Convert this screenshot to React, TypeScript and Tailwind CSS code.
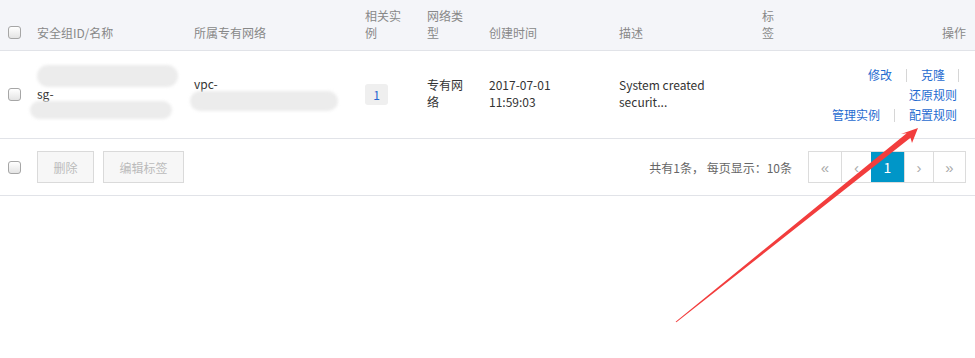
import type { ReactNode } from 'react'

const COLS = 'grid grid-cols-[29px_157px_171px_62px_62px_130px_143px_32px_1fr]'

function Checkbox() {
  return (
    <span className="block w-[13px] h-[13px] rounded-[3px] border border-[#a6a6a6] bg-linear-to-b from-white to-[#e4e4e4]" />
  )
}

function Blob({ w, h, className = '' }: { w: string; h: string; className?: string }) {
  return <span className={`block rounded-full bg-[#ececec] blur-[1.5px] ${w} ${h} ${className}`} />
}

function Sep() {
  return <span className="mx-[14px] w-px h-[13px] bg-[#d6d6d6]" />
}

function Link({ children }: { children: ReactNode }) {
  return <a className="text-[#1f6bd0] cursor-pointer">{children}</a>
}

function PageCell({ children, w, active }: { children: ReactNode; w: string; active?: boolean }) {
  return (
    <span
      className={`flex items-center justify-center h-full ${w} ${
        active
          ? 'bg-[#0096c8] text-white text-[14px]'
          : "text-[#aaa] text-[15px] font-['Liberation_Sans',sans-serif] border-l border-[#dcdcdc] first:border-l-0"
      }`}
    >
      {children}
    </span>
  )
}

export default function App() {
  return (
    <div className="relative w-[975px] h-[358px] overflow-hidden bg-white text-[12px] leading-[17px] text-[#333] font-['Noto_Sans_CJK_SC',sans-serif]">
      {/* header */}
      <div className={`${COLS} h-[51px] items-end pb-[9px] bg-[#f4f5f9] border-b border-[#e1e3e8] text-[#888]`}>
        <div className="pl-[8px] h-[17px] flex items-center">
          <Checkbox />
        </div>
        <div className="px-2">安全组ID/名称</div>
        <div className="px-2">所属专有网络</div>
        <div className="px-2">相关实例</div>
        <div className="px-2">网络类型</div>
        <div className="px-2">创建时间</div>
        <div className="px-2">描述</div>
        <div className="px-2">标签</div>
        <div className="pr-[9px] text-right">操作</div>
      </div>

      {/* row */}
      <div className={`${COLS} h-[88px] pb-[3px] items-center border-b border-[#e1e3e8]`}>
        <div className="pl-[8px] pt-[3px]">
          <Checkbox />
        </div>
        <div className="px-2 flex flex-col">
          <Blob w="w-[141px]" h="h-[22px]" className="my-[-2px]" />
          <span>sg-</span>
          <Blob w="w-[142px]" h="h-[18px]" className="-ml-[7px] mt-[-1px]" />
        </div>
        <div className="px-2 flex flex-col">
          <span>vpc-</span>
          <Blob w="w-[148px]" h="h-[20px]" className="-ml-[4px] mt-[-1px]" />
        </div>
        <div className="px-2 pt-[3px]">
          <span className="flex items-center justify-center w-[23px] h-[21px] rounded-[3px] bg-[#efefef] text-[#2366d1]">1</span>
        </div>
        <div className="px-2">专有网络</div>
        <div className="px-2 flex flex-col">
          <span>2017-07-01</span>
          <span>11:59:03</span>
        </div>
        <div className="px-2 flex flex-col">
          <span>System created</span>
          <span>securit...</span>
        </div>
        <div className="px-2" />
        <div className="pr-[16px] pt-[4px] flex flex-col items-end leading-[20px]">
          <div className="flex items-center">
            <Link>修改</Link>
            <Sep />
            <Link>克隆</Link>
            <span className="ml-[13px] w-px h-[13px] bg-[#d6d6d6]" />
          </div>
          <div className="flex items-center pr-[2px]">
            <Link>还原规则</Link>
          </div>
          <div className="flex items-center pr-[2px]">
            <Link>管理实例</Link>
            <Sep />
            <Link>配置规则</Link>
          </div>
        </div>
      </div>

      {/* footer */}
      <div className="flex items-center h-[57px] pl-[8px] pr-[9px] border-b border-[#e1e3e8]">
        <Checkbox />
        <div className="ml-[16px] flex gap-[9px]">
          <button className="h-[32px] w-[57px] border border-[#dadada] bg-[#f7f7f7] text-[#bbb]">删除</button>
          <button className="h-[32px] w-[81px] border border-[#dadada] bg-[#f7f7f7] text-[#bbb]">编辑标签</button>
        </div>
        <div className="ml-auto flex items-center">
          <span className="text-[#666]">共有1条， 每页显示：10条</span>
          <div className="ml-[16px] flex h-[32px] border border-[#dcdcdc]">
            <PageCell w="w-[32px]">«</PageCell>
            <PageCell w="w-[30px]">‹</PageCell>
            <PageCell w="w-[33px]" active>
              1
            </PageCell>
            <PageCell w="w-[29px]">›</PageCell>
            <PageCell w="w-[32px]">»</PageCell>
          </div>
        </div>
      </div>

      {/* annotation arrow */}
      <svg className="absolute inset-0 pointer-events-none" width="975" height="358" viewBox="0 0 975 358">
        <polygon
          points="675.6,321.7 906.7,133.2 901,134 918,128 912,143 910.5,137.8 676.4,322.3"
          fill="#f23d3d"
        />
      </svg>
    </div>
  )
}
